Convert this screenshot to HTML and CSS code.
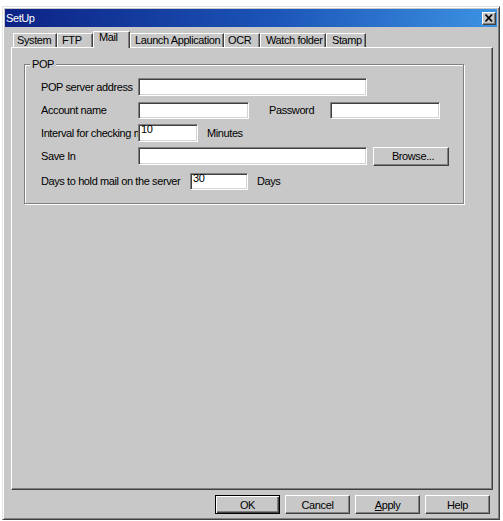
FILE: index.html
```html
<!DOCTYPE html>
<html>
<head>
<meta charset="utf-8">
<title>SetUp</title>
<link rel="stylesheet" href="styles.css">
</head>
<body>
<div class="window">
  <div class="titlebar">
    <span class="title">SetUp</span>
    <span class="close"><svg width="12" height="10" viewBox="0 0 12 10"><path d="M2.5 1.5 L9 8.5 M9 1.5 L2.5 8.5" stroke="#000" stroke-width="1.8" fill="none"/></svg></span>
  </div>
  <div class="client">
    <div class="tabs">
      <div class="tab t-system">System</div>
      <div class="tab t-ftp">FTP</div>
      <div class="tab active t-mail">Mail</div>
      <div class="tab t-launch">Launch Application</div>
      <div class="tab t-ocr">OCR</div>
      <div class="tab t-watch">Watch folder</div>
      <div class="tab t-stamp">Stamp</div>
    </div>
    <div class="panel">
      <div class="group">
        <span class="legend">POP</span>
        <div class="row">
          <span class="lbl">POP server address</span>
          <span class="edit w-long"></span>
        </div>
        <div class="row">
          <span class="lbl">Account name</span>
          <span class="edit w-mid"></span>
          <span class="lbl-pw">Password</span>
          <span class="edit w-pw"></span>
        </div>
        <div class="row">
          <span class="lbl">Interval for checking mail</span>
          <span class="edit w-short">10</span>
          <span class="unit">Minutes</span>
        </div>
        <div class="row">
          <span class="lbl">Save In</span>
          <span class="edit w-long"></span>
          <span class="btn browse">Browse...</span>
        </div>
        <div class="row row-days">
          <span class="lbl lbl-days">Days to hold mail on the server</span>
          <span class="edit w-days">30</span>
          <span class="unit">Days</span>
        </div>
      </div>
    </div>
    <div class="buttons">
      <span class="btn default">OK</span>
      <span class="btn">Cancel</span>
      <span class="btn"><u>A</u>pply</span>
      <span class="btn">Help</span>
    </div>
  </div>
</div>
</body>
</html>
```
FILE: styles.css
```css
* { box-sizing: border-box; }
html, body { margin: 0; padding: 0; background: #fff; }
body {
  font-family: "Liberation Sans", Arial, sans-serif;
  font-size: 11px;
  letter-spacing: -0.4px;
  color: #000;
}
.window {
  margin: 6px 0 0 2px;
  width: 498px;
  height: 514px;
  background: #c8c8c8;
  border: 1px solid;
  border-color: #e4e4e4 #404040 #404040 #e4e4e4;
  box-shadow: inset 1px 1px #fff, inset -1px -1px #808080;
  padding: 2px;
  display: flex;
  flex-direction: column;
}
.titlebar {
  height: 18px;
  flex: none;
  display: flex;
  align-items: center;
  justify-content: space-between;
  padding: 0 1px 0 1px;
  background: linear-gradient(to right, #0c2284 0%, #1c55b8 55%, #3c92e2 100%);
  color: #fff;
}
.title { line-height: 14px; }
.close {
  width: 14px;
  height: 13px;
  background: #c8c8c8;
  border: 1px solid;
  border-color: #fff #404040 #404040 #fff;
  box-shadow: inset -1px -1px #808080;
  display: flex;
  align-items: center;
  justify-content: center;
}
.client {
  flex: 1;
  padding-top: 4px;
  display: flex;
  flex-direction: column;
}
.tabs {
  height: 16px;
  margin-left: 8px;
  display: flex;
  align-items: flex-end;
  flex: none;
}
.tab {
  height: 14px;
  border-top: 1px solid #fff;
  border-left: 1px solid #fff;
  border-right: 1px solid #404040;
  box-shadow: inset -1px 0 #808080;
  padding-left: 3px;
  line-height: 12px;
  white-space: nowrap;
}
.tab.active {
  height: 17px;
  margin-bottom: -1px;
  position: relative;
  z-index: 1;
  background: #c8c8c8;
  padding-left: 5px;
  line-height: 11px;
}
.t-system { width: 44px; }
.t-ftp { width: 36px; padding-left: 4px; }
.t-mail { width: 37px; }
.t-launch { width: 94px; padding-left: 4px; }
.t-ocr { width: 36px; }
.t-watch { width: 66px; padding-left: 5px; }
.t-stamp { width: 40px; padding-left: 5px; }
.panel {
  margin-left: 6px;
  width: 482px;
  height: 443px;
  flex: none;
  border: 1px solid;
  border-color: #fff #404040 #404040 #fff;
  box-shadow: inset -1px -1px #808080;
  padding: 16px 0 0 12px;
}
.group {
  position: relative;
  width: 440px;
  border: 1px solid #808080;
  box-shadow: inset 1px 1px #fff, 1px 1px #fff;
  padding: 13px 0 13px 16px;
  display: flex;
  flex-direction: column;
  gap: 5px;
}
.legend {
  position: absolute;
  top: -7px;
  left: 5px;
  padding: 0 2px;
  background: #c8c8c8;
  line-height: 13px;
}
.row {
  height: 18px;
  display: flex;
  align-items: center;
}
.row-days { margin-top: 2px; }
.lbl {
  width: 97px;
  flex: none;
  white-space: nowrap;
  overflow: hidden;
}
.lbl-days { width: 149px; }
.edit {
  display: block;
  flex: none;
  height: 18px;
  background: #fff;
  border: 1px solid;
  border-color: #808080 #fff #fff #808080;
  box-shadow: inset 1px 1px #404040, inset -1px -1px #d4d4d4;
  padding: 0 2px;
  line-height: 9px;
}
.w-long { width: 229px; }
.w-mid { width: 111px; height: 17px; }
.w-pw { width: 110px; height: 17px; }
.w-short { width: 60px; }
.w-days { width: 58px; height: 17px; }
.lbl-pw { margin-left: 20px; width: 61px; flex: none; }
.unit { margin-left: 9px; }
.btn {
  width: 65px;
  height: 19px;
  flex: none;
  border: 1px solid;
  border-color: #fff #404040 #404040 #fff;
  box-shadow: inset -1px -1px #808080;
  display: flex;
  align-items: center;
  justify-content: center;
}
.btn u { text-decoration: underline; }
.browse { width: 76px; margin-left: 6px; padding-left: 4px; }
.btn.default {
  border-color: #000;
  box-shadow: inset 1px 1px #fff, inset -1px -1px #404040, inset -2px -2px #808080;
}
.buttons {
  margin-top: 5px;
  display: flex;
  justify-content: flex-end;
  gap: 5px;
  padding-right: 7px;
  flex: none;
}
```
